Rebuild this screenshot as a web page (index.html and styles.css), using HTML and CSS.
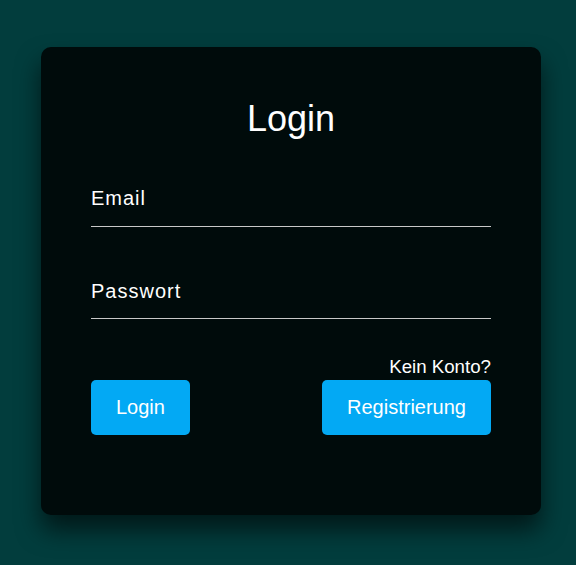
FILE: index.html
```html
<!DOCTYPE html>
<html lang="de">
<head>
<meta charset="utf-8">
<title>Login</title>
<link rel="stylesheet" href="styles.css">
</head>
<body>
<div class="card">
  <h2 class="title">Login</h2>
  <div class="field field-email">
    <span class="label">Email</span>
  </div>
  <div class="field field-pass">
    <span class="label">Passwort</span>
  </div>
  <div class="actions">
    <button class="btn">Login</button>
    <div class="reg">
      <span class="hint">Kein Konto?</span>
      <button class="btn">Registrierung</button>
    </div>
  </div>
</div>
</body>
</html>
```
FILE: styles.css
```css
html, body {
  margin: 0;
  padding: 0;
  height: 100%;
}
body {
  background: #023d3d;
  font-family: "Liberation Sans", Arial, sans-serif;
  color: #fff;
  padding: 47px 0 0 41px;
  box-sizing: border-box;
}
.card {
  width: 500px;
  height: 468px;
  box-sizing: border-box;
  background: #000b0b;
  border-radius: 10px;
  box-shadow: 0 15px 25px rgba(0, 0, 0, 0.6);
  padding: 50px 50px 0;
}
.title {
  margin: 0;
  font-size: 36px;
  font-weight: normal;
  line-height: 43px;
  text-align: center;
}
.field {
  border-bottom: 1px solid #c8c8c8;
}
.field-email {
  margin-top: 46px;
  height: 40px;
}
.field-pass {
  margin-top: 52px;
  height: 39px;
}
.label {
  display: block;
  font-size: 20px;
  line-height: 24px;
  letter-spacing: 1px;
}
.actions {
  margin-top: 37px;
  display: flex;
  justify-content: space-between;
  align-items: flex-end;
}
.reg {
  display: flex;
  flex-direction: column;
  align-items: flex-end;
}
.hint {
  font-size: 18.7px;
  line-height: 21.5px;
  margin-bottom: 2px;
}
.btn {
  height: 55px;
  padding: 0 25px;
  border: none;
  border-radius: 5px;
  background: #03a9f4;
  color: #fff;
  font-family: "Liberation Sans", Arial, sans-serif;
  font-size: 20px;
}
```
